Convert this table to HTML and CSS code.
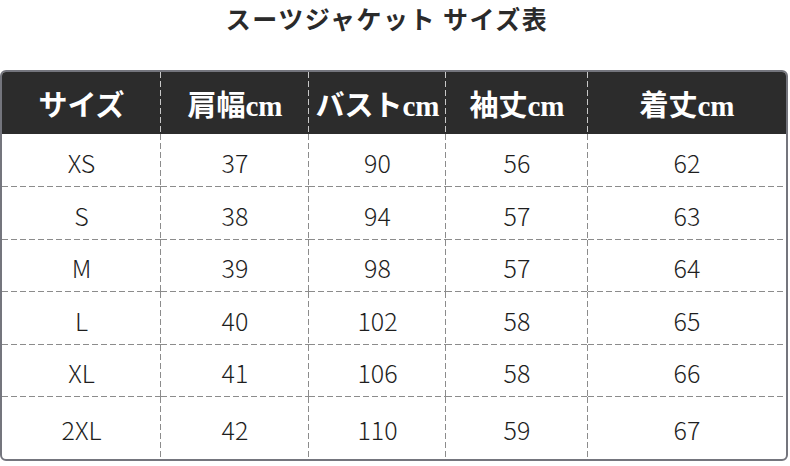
FILE: index.html
```html
<!DOCTYPE html>
<html lang="ja">
<head>
<meta charset="utf-8">
<title>スーツジャケット サイズ表</title>
<link rel="stylesheet" href="styles.css">
</head>
<body>
<h1 class="title">スーツジャケット サイズ表</h1>
<div class="table">
  <div class="hd">サイズ</div>
  <div class="hd">肩幅cm</div>
  <div class="hd">バストcm</div>
  <div class="hd">袖丈cm</div>
  <div class="hd last">着丈cm</div>

  <div class="cell">XS</div><div class="cell">37</div><div class="cell">90</div><div class="cell">56</div><div class="cell last">62</div>
  <div class="cell">S</div><div class="cell">38</div><div class="cell">94</div><div class="cell">57</div><div class="cell last">63</div>
  <div class="cell">M</div><div class="cell">39</div><div class="cell">98</div><div class="cell">57</div><div class="cell last">64</div>
  <div class="cell">L</div><div class="cell">40</div><div class="cell">102</div><div class="cell">58</div><div class="cell last">65</div>
  <div class="cell">XL</div><div class="cell">41</div><div class="cell">106</div><div class="cell">58</div><div class="cell last">66</div>
  <div class="cell bottom">2XL</div><div class="cell bottom">42</div><div class="cell bottom">110</div><div class="cell bottom">59</div><div class="cell bottom last">67</div>
</div>
</body>
</html>
```
FILE: styles.css
```css
html, body {
  margin: 0;
  padding: 0;
  background: #ffffff;
}

body {
  width: 790px;
  height: 466px;
  overflow: hidden;
  font-family: "Noto Sans CJK JP", "Noto Sans", sans-serif;
}

.title {
  margin: 0 0 33px 0;
  padding: 0 16px 0 0;
  height: 37px;
  line-height: 37px;
  font-size: 25px;
  font-weight: 700;
  color: #2a2a2a;
  text-align: center;
  letter-spacing: 1.5px;
}

.table {
  box-sizing: border-box;
  width: 788px;
  height: 391px;
  border: 2px solid #74757d;
  border-radius: 6px;
  overflow: hidden;
  display: grid;
  grid-template-columns: 159px 148px 137px 142px 1fr;
  grid-template-rows: 62px 53px 53px 52px 53px 52px 1fr;
}

.hd {
  background-color: #2c2c2c;
  color: #ffffff;
  display: flex;
  align-items: center;
  justify-content: center;
  font-family: "Liberation Serif", "Noto Sans CJK JP", serif;
  font-weight: 700;
  font-size: 29px;
  background-image: repeating-linear-gradient(to bottom, #c8c8c8 0 6px, transparent 6px 9px);
  background-repeat: no-repeat;
  background-position: right top;
  background-size: 1px 100%;
}

.cell {
  display: flex;
  align-items: center;
  justify-content: center;
  color: #1e1e1e;
  font-size: 25px;
  font-weight: 300;
  padding-top: 2px;
  background-image:
    repeating-linear-gradient(to right, #8c8c8c 0 6px, transparent 6px 9px),
    repeating-linear-gradient(to bottom, #8c8c8c 0 6px, transparent 6px 9px);
  background-repeat: no-repeat, no-repeat;
  background-position: left bottom, right top;
  background-size: 100% 1px, 1px 100%;
}

.hd.last {
  background-image: none;
}

.cell.last {
  background-image: repeating-linear-gradient(to right, #8c8c8c 0 6px, transparent 6px 9px);
  background-size: 100% 1px;
  background-position: left bottom;
}

.cell.bottom {
  background-image: repeating-linear-gradient(to bottom, #8c8c8c 0 6px, transparent 6px 9px);
  background-size: 1px 100%;
  background-position: right top;
}

.cell.bottom.last {
  background-image: none;
}
```
